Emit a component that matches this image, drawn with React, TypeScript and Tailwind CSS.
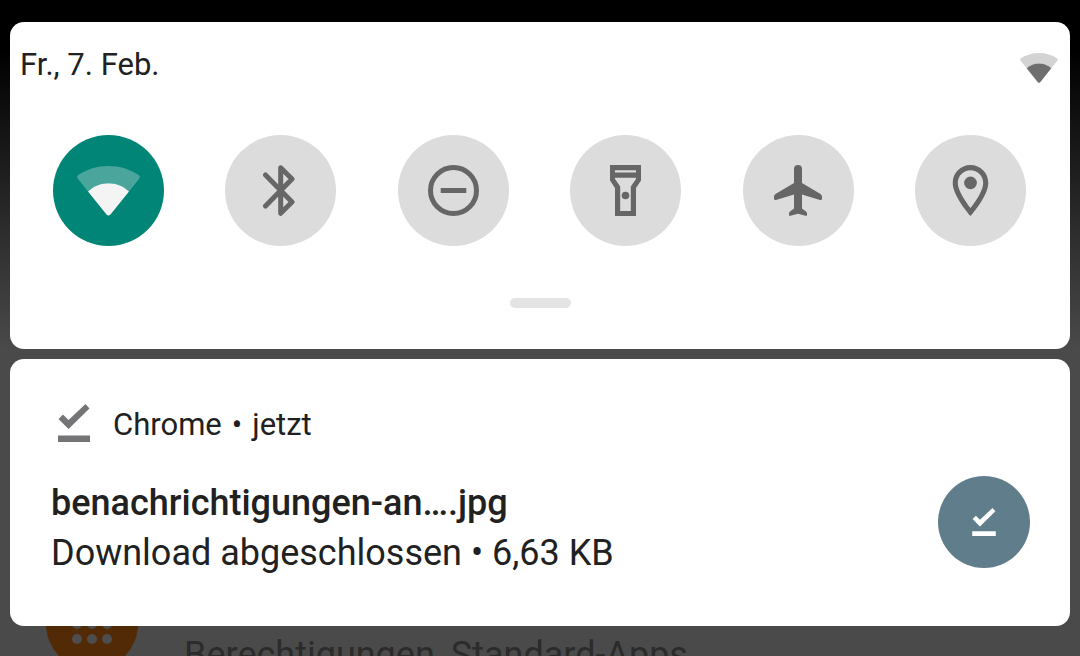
import type { ReactNode } from 'react'

function WifiIcon({ className }: { className?: string }) {
  return (
    <svg viewBox="0 0 63 50" fill="currentColor" className={className} aria-hidden="true">
      <path
        opacity="0.3"
        d="M.7 12.6C-.2 11.5 0 10 1.2 9.1C10 3.2 20.2 0 31.5 0S53 3.2 61.8 9.1C63 10 63.2 11.5 62.3 12.6L52 25.6C46.5 20.3 39.5 17.3 31.5 17.3S16.5 20.3 11 25.6Z"
      />
      <path d="M11 25.6C16.5 20.3 23.5 17.3 31.5 17.3S46.500 20.3 52 25.6L33.5 48.6Q31.5 50.4 29.5 48.6Z" />
    </svg>
  )
}

function BluetoothIcon() {
  return (
    <svg viewBox="0 0 35 51" fill="none" stroke="currentColor" strokeWidth="5" strokeLinecap="round" strokeLinejoin="round" className="h-[51px] w-[35px]" aria-hidden="true">
      <path d="M2.5 10L29 37L17.7 48.3V2.7L29 14L2.5 41" />
    </svg>
  )
}

function DisturbIcon() {
  return (
    <svg viewBox="0 0 51 51" fill="none" stroke="currentColor" strokeWidth="5" className="size-[51px]" aria-hidden="true">
      <circle cx="25.5" cy="25.5" r="23" />
      <path d="M12.7 25.5H38.3" />
    </svg>
  )
}

function FlashlightIcon() {
  return (
    <svg viewBox="0 0 31 51" fill="currentColor" className="h-[51px] w-[31px]" aria-hidden="true">
      <path fillRule="evenodd" d="M0 0H31V15.5L26 23V51H5V23L0 15.5ZM5 5.2V7.6H26V5.2ZM5 12.8V14L10.2 21.6V46H20.8V21.6L26 14V12.8Z" />
      <circle cx="15.5" cy="30.5" r="3.8" />
    </svg>
  )
}

function AirplaneIcon() {
  return (
    <svg viewBox="0 0 48 51" fill="currentColor" className="h-[51px] w-12" aria-hidden="true">
      <path d="M20 4a4 4 0 0 1 8 0V18L46.5 29Q48 30 48 31.500V33.5Q48 35.5 46 35L28 29.5V43.5L32 46.5Q33 47.3 33 48.5V50Q33 51.2 31.5 50.7L24 48.7L16.5 50.7Q15 51.2 15 50V48.5Q15 47.3 16 46.5L20 43.5V29.5L2 35Q0 35.5 0 33.5V31.5Q0 30 1.5 29L20 18Z" />
    </svg>
  )
}

function LocationIcon() {
  return (
    <svg viewBox="0 0 24 24" fill="currentColor" className="size-[61px]" aria-hidden="true">
      <path d="M12 2C8.13 2 5 5.13 5 9c0 5.25 7 13 7 13s7-7.75 7-13c0-3.87-3.13-7-7-7zM7 9c0-2.76 2.24-5 5-5s5 2.24 5 5c0 2.88-2.88 7.19-5 9.88C9.92 16.21 7 11.85 7 9z" />
      <circle cx="12" cy="9" r="2.5" />
    </svg>
  )
}

function DoneIcon({ className }: { className?: string }) {
  return (
    <svg viewBox="0 0 32 38" fill="currentColor" className={className} aria-hidden="true">
      <path d="M.5 15L5 10.5L10.5 16L27.5 0L31.5 4.5L10.5 25ZM0 31.5H32V38H0Z" />
    </svg>
  )
}

type Tile = { label: string; icon: ReactNode; active?: boolean }

const tiles: Tile[] = [
  { label: 'WLAN', icon: <WifiIcon className="h-[50px] w-[63px]" />, active: true },
  { label: 'Bluetooth', icon: <BluetoothIcon /> },
  { label: 'Bitte nicht stören', icon: <DisturbIcon /> },
  { label: 'Taschenlampe', icon: <FlashlightIcon /> },
  { label: 'Flugmodus', icon: <AirplaneIcon /> },
  { label: 'Standort', icon: <LocationIcon /> },
]

function QuickSettings() {
  return (
    <section className="rounded-[14px] bg-white pb-[41px]">
      <header className="flex items-end justify-between pt-[25px] pr-3 pb-6 pl-2.5">
        <time className="text-[31px] leading-9">Fr., 7. Feb.</time>
        <WifiIcon className="h-[30px] w-[38px] text-[#6e6e6e]" />
      </header>

      <div className="flex justify-between pt-7 pr-11 pl-[43px]">
        {tiles.map((tile) => (
          <button
            key={tile.label}
            type="button"
            aria-label={tile.label}
            aria-pressed={!!tile.active}
            className={
              tile.active
                ? 'flex size-[111px] items-center justify-center rounded-full bg-[#018577] text-[#f4f4f4]'
                : 'flex size-[111px] items-center justify-center rounded-full bg-[#dcdcdc] text-[#666666]'
            }
          >
            {tile.icon}
          </button>
        ))}
      </div>

      <div className="mx-auto mt-[52px] h-2.5 w-[61px] rounded-full bg-[#e4e4e4]" />
    </section>
  )
}

function DownloadNotification() {
  return (
    <article className="rounded-[14px] bg-white px-10 pt-[41px] pb-12">
      <header className="flex items-center gap-[23px] pl-2">
        <DoneIcon className="h-[38px] w-8 text-[#757577]" />
        <p className="flex gap-2.5 pt-1 text-[31px] leading-[42px]">
          <span>Chrome</span>
          <span>•</span>
          <span>jetzt</span>
        </p>
      </header>

      <div className="mt-[30px] flex items-start justify-between">
        <div className="pt-0.5 pl-px text-[36px] leading-[50px]">
          <h2 className="font-medium">benachrichtigungen-an….jpg</h2>
          <p>Download abgeschlossen • 6,63 KB</p>
        </div>
        <span className="flex size-[92px] shrink-0 items-center justify-center rounded-full bg-[#607d8b] text-white">
          <DoneIcon className="h-7 w-6" />
        </span>
      </div>
    </article>
  )
}

// Dimmed settings entry peeking out from under the shade
function SettingsRow() {
  return (
    <div className="-mt-12 flex items-start gap-[46px] pl-9">
      <span className="flex size-[92px] shrink-0 items-center justify-center rounded-full bg-[#522a06]">
        <span className="grid grid-cols-3 gap-[5px]">
          {Array.from({ length: 9 }, (_, i) => (
            <span key={i} className="size-2.5 rounded-full bg-[#4d4d4d]" />
          ))}
        </span>
      </span>
      <p className="pt-14 text-[36px] leading-[42px] text-[#2b2b2b]">Berechtigungen, Standard-Apps</p>
    </div>
  )
}

export default function App() {
  return (
    <div className="h-screen overflow-hidden bg-[#4a4a4a] bg-[linear-gradient(#000_50px,#4a4a4a_350px)] px-2.5 pt-[22px] font-[Roboto,sans-serif] text-[#212121]">
      <main className="relative z-10 flex flex-col gap-2.5">
        <QuickSettings />
        <DownloadNotification />
      </main>
      <SettingsRow />
    </div>
  )
}
